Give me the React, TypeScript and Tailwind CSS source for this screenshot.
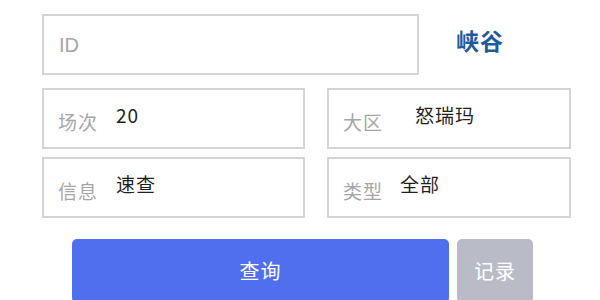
const Field = ({ label, value, width, valueGap }: { label: string; value: string; width: string; valueGap: string }) => (
  <div className={`${width} h-[61px] border-2 border-[#d4d4d4] bg-white flex items-center pl-[14px]`}>
    <span className="text-[19px] tracking-[1px] text-[#a6a6a6] mt-[8px]">{label}</span>
    <span className={`text-[19px] tracking-[1px] text-[#1f1f1f] ${valueGap} -mt-[7px]`}>{value}</span>
  </div>
);

export default function App() {
  return (
    <div
      className="w-[600px] h-[300px] bg-white overflow-hidden"
      style={{ fontFamily: '"Noto Sans CJK SC", "Noto Sans", sans-serif' }}
    >
      <div className="flex items-center pt-[14px] pl-[42px]">
        <div className="w-[377px] h-[61px] border-2 border-[#d4d4d4] flex items-center pl-[15px]">
          <span className="text-[20px] text-[#a6a6a6] font-['Liberation_Sans']">ID</span>
        </div>
        <span className="ml-[37px] -mt-[8px] text-[23px] tracking-[1px] font-bold text-[#1f5a9c]">峡谷</span>
      </div>

      <div className="flex gap-[22px] pl-[42px] mt-[13px]">
        <Field label="场次" value="20" width="w-[263px]" valueGap="ml-[18px]" />
        <Field label="大区" value="怒瑞玛" width="w-[244px]" valueGap="ml-[32px]" />
      </div>
      <div className="flex gap-[22px] pl-[42px] mt-[8px]">
        <Field label="信息" value="速查" width="w-[263px]" valueGap="ml-[18px]" />
        <Field label="类型" value="全部" width="w-[244px]" valueGap="ml-[17px]" />
      </div>

      <div className="flex gap-[8px] pl-[72px] mt-[21px]">
        <button className="w-[377px] h-[64px] rounded-[5px] bg-[#4f6fef] text-white text-[20px] tracking-[1px] flex items-start justify-center pt-[17px]">
          查询
        </button>
        <button className="w-[76px] h-[64px] rounded-[5px] bg-[#b9bbc6] text-white text-[20px] tracking-[1px] flex items-start justify-center pt-[17px]">
          记录
        </button>
      </div>
    </div>
  );
}
